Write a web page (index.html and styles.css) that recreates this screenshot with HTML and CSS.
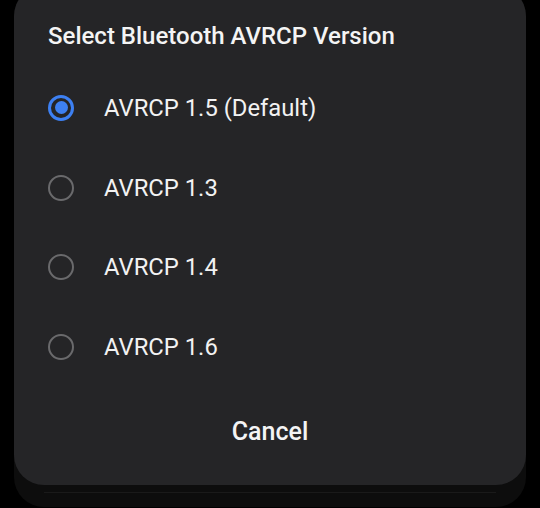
FILE: index.html
```html
<!DOCTYPE html>
<html>
<head>
<meta charset="utf-8">
<link rel="stylesheet" href="styles.css">
</head>
<body>
<div class="stage">
  <div class="dialog">
    <div class="title">Select Bluetooth AVRCP Version</div>
    <div class="options">
      <div class="option"><span class="radio checked"></span><span class="label">AVRCP 1.5 (Default)</span></div>
      <div class="option"><span class="radio"></span><span class="label">AVRCP 1.3</span></div>
      <div class="option"><span class="radio"></span><span class="label">AVRCP 1.4</span></div>
      <div class="option"><span class="radio"></span><span class="label">AVRCP 1.6</span></div>
    </div>
    <div class="actions"><span class="cancel">Cancel</span></div>
  </div>
</div>
</body>
</html>
```

FILE: styles.css
```css
html, body {
  margin: 0;
  padding: 0;
  background: #000;
  width: 540px;
  height: 508px;
  overflow: hidden;
  font-family: Roboto, "Noto Sans", sans-serif;
}
.stage {
  position: relative;
  margin: -14px 14px 0 14px;
  padding-bottom: 22px;
}
.stage::before {
  content: "";
  position: absolute;
  left: 0;
  right: 0;
  top: 0;
  bottom: 0;
  border-radius: 30px;
  background: #0d0d0d;
}
.stage::after {
  content: "";
  position: absolute;
  left: 30px;
  right: 30px;
  bottom: 14px;
  height: 1px;
  background: #1a1a1a;
}
.dialog {
  position: relative;
  z-index: 1;
  background: #252527;
  border-radius: 30px;
  padding: 34px 0 0 0;
  height: 499px;
  box-sizing: border-box;
  color: #f4f4f4;
}
.title {
  padding-left: 34px;
  font-size: 24px;
  font-weight: 500;
  line-height: 32px;
  height: 32px;
}
.options {
  margin-top: 16px;
  display: flex;
  flex-direction: column;
}
.option {
  display: flex;
  align-items: center;
  height: 79.7px;
  padding-left: 34px;
}
.radio {
  width: 26px;
  height: 26px;
  box-sizing: border-box;
  border-radius: 50%;
  border: 2.5px solid #6a6a6c;
  display: inline-flex;
  align-items: center;
  justify-content: center;
  flex: none;
}
.radio.checked {
  border: 3px solid #3d80f2;
}
.radio.checked::after {
  content: "";
  width: 13px;
  height: 13px;
  border-radius: 50%;
  background: #3d80f2;
}
.label {
  margin-left: 30px;
  font-size: 23.8px;
  line-height: 30px;
  color: #f2f2f2;
}
.actions {
  display: flex;
  justify-content: center;
  margin-top: 29px;
}
.cancel {
  font-size: 25px;
  font-weight: 500;
  line-height: 32px;
  color: #f4f4f4;
}
```
